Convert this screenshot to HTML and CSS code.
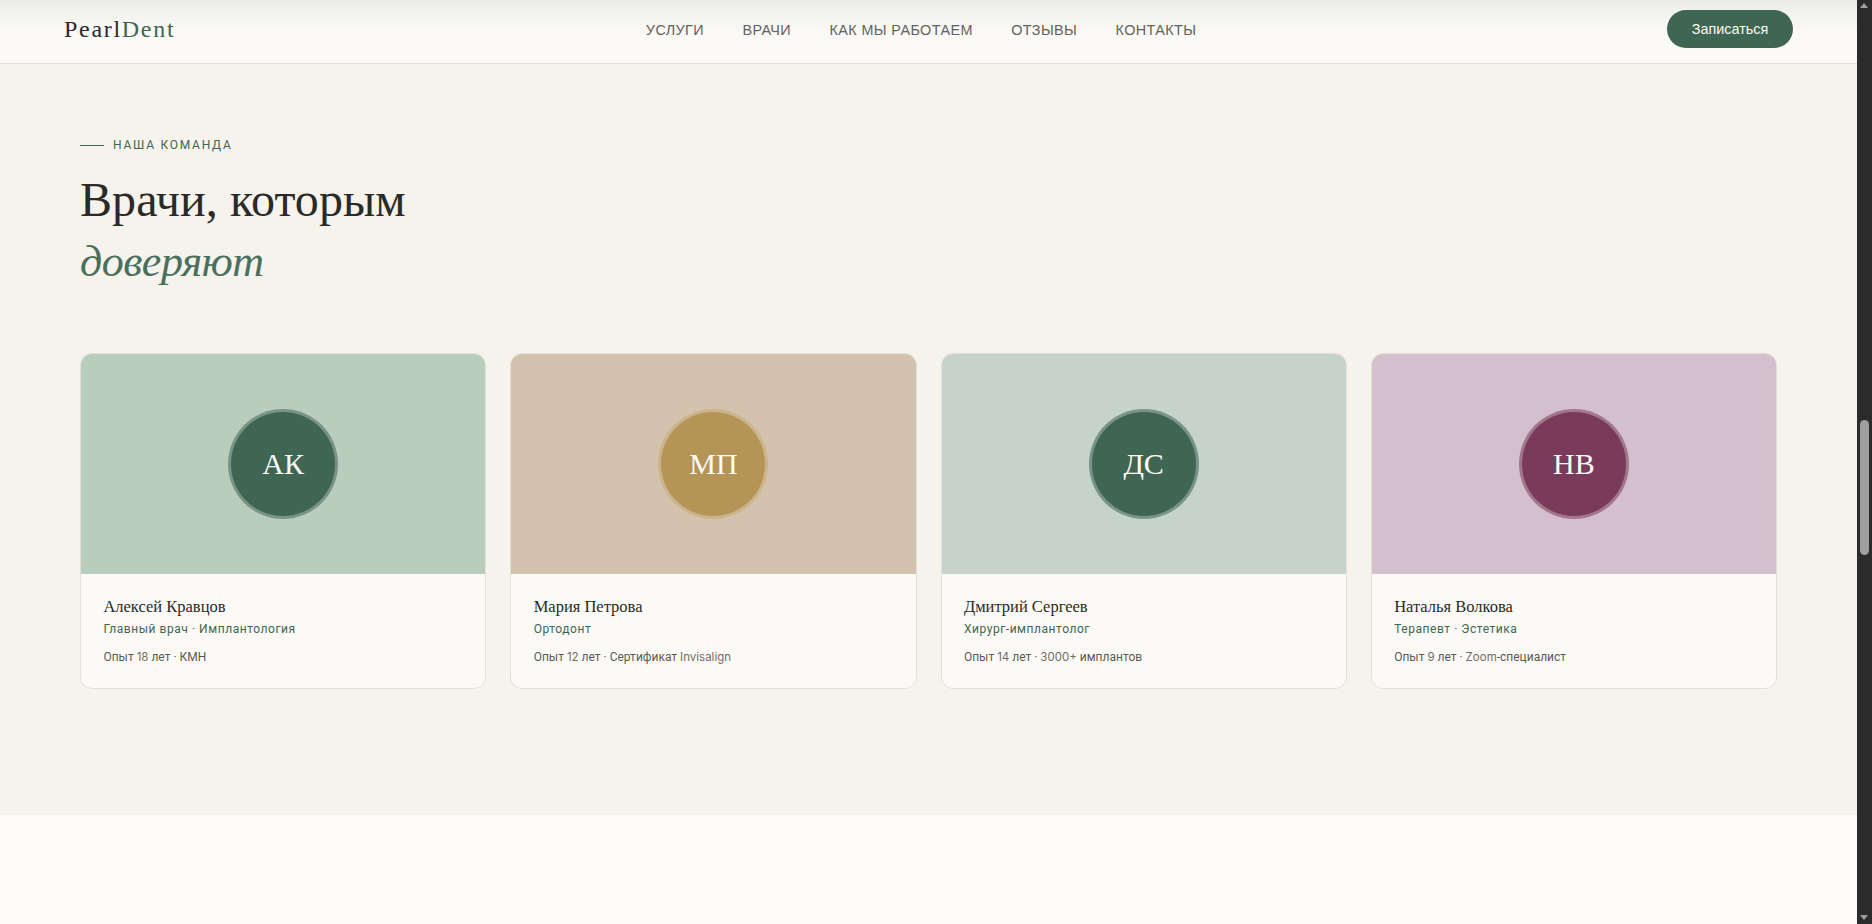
FILE: index.html
```html
<!DOCTYPE html>
<html lang="ru">
<head>
  <meta charset="UTF-8" />
  <meta name="viewport" content="width=device-width, initial-scale=1" />
  <title>PearlDent</title>
  <link rel="stylesheet" href="styles.css">
</head>
<body>
  <div class="page">
    <header class="nav">
      <a class="logo" href="#">Pearl<span>Dent</span></a>
      <nav class="nav-links">
        <a href="#">Услуги</a>
        <a href="#">Врачи</a>
        <a href="#">Как мы работаем</a>
        <a href="#">Отзывы</a>
        <a href="#">Контакты</a>
      </nav>
      <a class="nav-btn" href="#">Записаться</a>
    </header>

    <section class="team">
      <div class="eyebrow">Наша команда</div>
      <h2 class="title">Врачи, которым<br><em>доверяют</em></h2>

      <div class="grid">
        <article class="card">
          <div class="photo photo-green">
            <div class="avatar avatar-green">АК</div>
          </div>
          <div class="info">
            <h3>Алексей Кравцов</h3>
            <p class="role">Главный врач · Имплантология</p>
            <p class="meta">Опыт <span class="lat">18</span> лет · КМН</p>
          </div>
        </article>
        <article class="card">
          <div class="photo photo-sand">
            <div class="avatar avatar-gold">МП</div>
          </div>
          <div class="info">
            <h3>Мария Петрова</h3>
            <p class="role">Ортодонт</p>
            <p class="meta">Опыт <span class="lat">12</span> лет · Сертификат <span class="lat">Invisalign</span></p>
          </div>
        </article>
        <article class="card">
          <div class="photo photo-mist">
            <div class="avatar avatar-green">ДС</div>
          </div>
          <div class="info">
            <h3>Дмитрий Сергеев</h3>
            <p class="role">Хирург-имплантолог</p>
            <p class="meta">Опыт <span class="lat">14</span> лет · <span class="lat">3000+</span> имплантов</p>
          </div>
        </article>
        <article class="card">
          <div class="photo photo-plum">
            <div class="avatar avatar-plum">НВ</div>
          </div>
          <div class="info">
            <h3>Наталья Волкова</h3>
            <p class="role">Терапевт · Эстетика</p>
            <p class="meta">Опыт <span class="lat">9</span> лет · <span class="lat">Zoom</span>-специалист</p>
          </div>
        </article>
      </div>
    </section>

    <div class="next-section"></div>
  </div>

  <!-- window scrollbar from the screenshot -->
  <div class="scrollbar">
    <span class="arrow arrow-up"></span>
    <span class="thumb"></span>
    <span class="arrow arrow-down"></span>
  </div>
</body>
</html>
```

FILE: styles.css
```css
:root {
  --green: #3f6653;
  --bg: #f6f3ed;
  --paper: #fcfaf7;
  --text: #2a2a28;
  --muted: #5a5a55;
  --line: #e2e0db;
}
* {
  box-sizing: border-box;
}
html, body {
  height: 100%;
}
body {
  margin: 0;
  display: flex;
  overflow: hidden;
  background: var(--paper);
  color: var(--text);
  font-family: Roboto, 'Liberation Sans', sans-serif;
}
.page {
  flex: 1;
  min-width: 0;
  display: flex;
  flex-direction: column;
}
a {
  text-decoration: none;
  color: inherit;
}

/* nav */
.nav {
  height: 64px;
  flex: none;
  display: flex;
  align-items: center;
  justify-content: space-between;
  padding: 0 64px;
  background: linear-gradient(#ebece9, #f3f3f0 14px, var(--paper) 36px);
  border-bottom: 1px solid var(--line);
}
.logo {
  font-family: 'Liberation Serif', serif;
  font-size: 24px;
  letter-spacing: 1.7px;
  margin-top: -4px;
}
.logo span {
  color: var(--green);
}
.nav-links {
  display: flex;
  gap: 38.4px;
  margin-top: -4px;
  font-family: 'Liberation Sans', sans-serif;
  font-size: 14.4px;
  letter-spacing: 0.4px;
  text-transform: uppercase;
  color: #62625d;
}
.nav-btn {
  width: 126px;
  height: 38px;
  margin-top: -5px;
  display: flex;
  align-items: center;
  justify-content: center;
  border-radius: 999px;
  background: var(--green);
  color: #fcfaf7;
  font-family: 'Liberation Sans', sans-serif;
  font-size: 14.4px;
}

/* team section */
.team {
  height: 751px;
  flex: none;
  padding: 74px 80px 0;
  background: var(--bg);
}
.eyebrow {
  display: flex;
  align-items: center;
  gap: 9px;
  height: 14px;
  font-size: 12px;
  letter-spacing: 1.75px;
  text-transform: uppercase;
  color: var(--green);
}
.eyebrow::before {
  content: '';
  width: 24px;
  height: 1px;
  background: var(--green);
}
.title {
  margin: 18px 0 0;
  font-family: 'Liberation Serif', serif;
  font-size: 48px;
  font-weight: 400;
  line-height: 60px;
  letter-spacing: 0.1px;
  color: var(--text);
}
.title em {
  font-size: 44px;
  letter-spacing: -0.5px;
  color: #4a705d;
}
.grid {
  display: grid;
  grid-template-columns: repeat(4, 1fr);
  gap: 24px;
  margin-top: 61px;
}
.card {
  height: 336px;
  background: var(--paper);
  border: 1px solid var(--line);
  border-radius: 12px;
  overflow: hidden;
}
.photo {
  height: 220px;
  display: flex;
  align-items: center;
  justify-content: center;
}
.photo-green { background: #b8cdbc; }
.photo-sand { background: #d3c3ae; }
.photo-mist { background: #c5d3cc; }
.photo-plum { background: #d4bfcd; }
.avatar {
  width: 110px;
  height: 110px;
  display: flex;
  align-items: center;
  justify-content: center;
  border: 3px solid rgba(255, 255, 255, 0.3);
  border-radius: 50%;
  color: var(--paper);
  font-family: 'Liberation Serif', serif;
  font-size: 30px;
}
.avatar-green { background: var(--green); }
.avatar-gold { background: #b59458; }
.avatar-plum { background: #7a3b5a; }
.info {
  padding: 23px 22.4px 0;
}
.info h3 {
  margin: 0;
  font-family: 'Liberation Serif', serif;
  font-size: 16.5px;
  font-weight: 400;
  line-height: 20px;
}
.role {
  margin: 4px 0 0;
  font-size: 12px;
  line-height: 17px;
  letter-spacing: 0.55px;
  color: var(--green);
}
.meta {
  margin: 11px 0 0;
  font-size: 12px;
  line-height: 17px;
  color: var(--muted);
}
.lat {
  font-family: Inter, Roboto, sans-serif;
  font-size: 11.5px;
  color: #6f6d66;
}
.next-section {
  flex: 1;
  background: #fdfbf7;
}

/* scrollbar */
.scrollbar {
  position: relative;
  width: 15px;
  flex: none;
  background: #2b2b2b;
}
.thumb {
  position: absolute;
  left: 3px;
  top: 420px;
  width: 9px;
  height: 135px;
  border-radius: 5px;
  background: #9f9f9f;
}
.arrow {
  position: absolute;
  left: 3px;
  width: 0;
  height: 0;
  border-left: 4.5px solid transparent;
  border-right: 4.5px solid transparent;
}
.arrow-up {
  top: 3px;
  border-bottom: 5px solid #9f9f9f;
}
.arrow-down {
  bottom: 4px;
  border-top: 5px solid #9f9f9f;
}
```
